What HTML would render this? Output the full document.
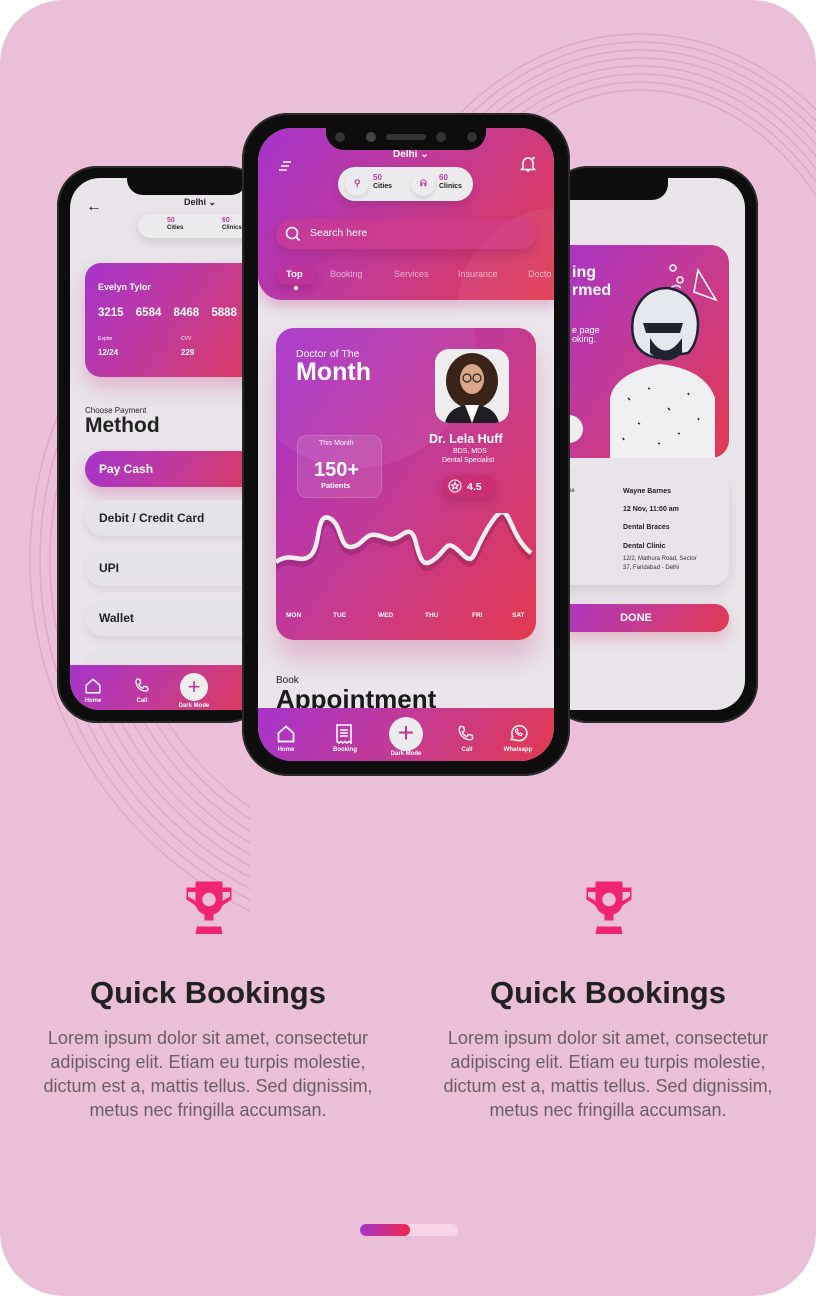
<!DOCTYPE html>
<html><head><meta charset="utf-8">
<style>
*{margin:0;padding:0;box-sizing:border-box}
body{width:816px;height:1296px;background:#fff;font-family:"Liberation Sans",sans-serif;overflow:hidden;position:relative}
.bg{position:absolute;left:0;top:0;width:816px;height:1296px;background:#ebbfd8;border-radius:64px;overflow:hidden}
.abs{position:absolute}
.grad{background:linear-gradient(125deg,#a634cc 0%,#c43a94 50%,#e23a50 100%)}
.phone{position:absolute;background:#0d0d0d;border-radius:40px;box-shadow:0 0 0 2px #2a2a2a inset}
.screen{position:absolute;background:#e9e5ea;overflow:hidden;border-radius:30px}
.notch{position:absolute;background:#0d0d0d;border-radius:0 0 16px 16px}
.w{color:#fff}
.b{font-weight:bold}
.t{position:absolute;white-space:nowrap}
.pill{position:absolute;background:#ecebee;border-radius:20px;box-shadow:0 4px 10px rgba(0,0,0,.12)}
.opt{position:absolute;left:15px;width:200px;height:36px;border-radius:18px;background:#e6e3e8;box-shadow:0 4px 8px rgba(0,0,0,.08);font-weight:bold;font-size:12px;color:#222;padding:11px 14px}
.nav{position:absolute;left:0;right:0;bottom:0}
.nl{position:absolute;font-size:6px;color:#fff;font-weight:bold;transform:translateX(-50%)}
</style></head><body>
<div class="bg">
<svg class="abs" style="left:0;top:0" width="816" height="1296">
<defs>
<clipPath id="c1"><rect x="360" y="30" width="456" height="240"/></clipPath>
<clipPath id="c2"><rect x="0" y="340" width="250" height="590"/></clipPath>
</defs>
<g fill="none" stroke="#dfa9c8" stroke-width="1.5" clip-path="url(#c1)">
<ellipse cx="640" cy="420" rx="240" ry="330"/>
<ellipse cx="640" cy="420" rx="248" ry="338"/>
<ellipse cx="640" cy="420" rx="256" ry="346"/>
<ellipse cx="640" cy="420" rx="264" ry="354"/>
<ellipse cx="640" cy="420" rx="272" ry="362"/>
<ellipse cx="640" cy="420" rx="280" ry="370"/>
<ellipse cx="640" cy="420" rx="288" ry="378"/>
<ellipse cx="640" cy="420" rx="296" ry="386"/>
</g>
<g fill="none" stroke="#dfa9c8" stroke-width="1.5" clip-path="url(#c2)">
<ellipse cx="420" cy="560" rx="300" ry="300"/>
<ellipse cx="420" cy="560" rx="310" ry="310"/>
<ellipse cx="420" cy="560" rx="320" ry="320"/>
<ellipse cx="420" cy="560" rx="330" ry="330"/>
<ellipse cx="420" cy="560" rx="340" ry="340"/>
<ellipse cx="420" cy="560" rx="350" ry="350"/>
<ellipse cx="420" cy="560" rx="360" ry="360"/>
<ellipse cx="420" cy="560" rx="370" ry="370"/>
<ellipse cx="420" cy="560" rx="380" ry="380"/>
<ellipse cx="420" cy="560" rx="390" ry="390"/>
</g>
</svg>

<!-- LEFT PHONE -->
<div class="phone" style="left:57px;top:166px;width:210px;height:557px;z-index:1">
<div class="screen" style="left:13px;top:12px;width:200px;height:532px">
 <div class="t" style="left:16px;top:20px;font-size:16px;color:#222">←</div>
 <div class="t b" style="left:114px;top:19px;font-size:9px;color:#222">Delhi ⌄</div>
 <div class="pill" style="left:68px;top:36px;width:130px;height:24px"></div>
 <div class="t b" style="left:97px;top:39px;font-size:7px;color:#c23aa0;line-height:7px">50<br><span style="color:#222;font-size:6px">Cities</span></div>
 <div class="t b" style="left:152px;top:39px;font-size:7px;color:#c23aa0;line-height:7px">60<br><span style="color:#222;font-size:6px">Clinics</span></div>
 <div class="abs grad" style="left:15px;top:85px;width:200px;height:114px;border-radius:16px;box-shadow:0 10px 20px rgba(200,60,130,.3)"></div>
 <div class="t b w" style="left:28px;top:104px;font-size:9px">Evelyn Tylor</div>
 <div class="t b w" style="left:28px;top:129px;font-size:11.5px;word-spacing:9px">3215 6584 8468 5888</div>
 <div class="t w" style="left:28px;top:158px;font-size:5px">Expire</div>
 <div class="t b w" style="left:28px;top:170px;font-size:8px">12/24</div>
 <div class="t w" style="left:111px;top:158px;font-size:5px">CVV</div>
 <div class="t b w" style="left:111px;top:170px;font-size:8px">229</div>
 <div class="t" style="left:15px;top:228px;font-size:8px;color:#222">Choose Payment</div>
 <div class="t b" style="left:15px;top:236px;font-size:21px;color:#222">Method</div>
 <div class="opt" style="top:273px;color:#fff;background:linear-gradient(110deg,#a634cc,#c43a94 50%,#e23a50);box-shadow:0 8px 14px rgba(200,60,130,.3)">Pay Cash</div>
 <div class="opt" style="top:322px">Debit / Credit Card</div>
 <div class="opt" style="top:372px">UPI</div>
 <div class="opt" style="top:422px">Wallet</div>
 <div class="opt" style="top:472px"></div>
 <div class="nav grad" style="height:45px">
  <svg class="abs" style="left:14px;top:12px" width="18" height="18" viewBox="0 0 24 24" fill="none" stroke="#fff" stroke-width="2"><path d="M3 11L12 3l9 8v10H3z"/></svg>
  <div class="nl" style="left:23px;top:33px">Home</div>
  <svg class="abs" style="left:64px;top:12px" width="16" height="16" viewBox="0 0 24 24" fill="none" stroke="#fff" stroke-width="2"><path d="M5 3l4 1 1 5-3 2a12 12 0 006 6l2-3 5 1 1 4c-1 2-3 2-5 2C9 20 4 15 3 8c0-2 0-4 2-5z"/></svg>
  <div class="nl" style="left:72px;top:33px">Call</div>
  <div class="abs" style="left:110px;top:8px;width:28px;height:28px;border-radius:50%;background:#eee;color:#c2338f;font-size:22px;text-align:center;line-height:27px">+</div>
  <div class="nl" style="left:124px;top:38px">Dark Mode</div>
 </div>
</div>
<div class="notch" style="left:70px;top:12px;width:120px;height:17px"></div>
</div>

<!-- RIGHT PHONE -->
<div class="phone" style="left:548px;top:166px;width:210px;height:557px;z-index:1">
<div class="screen" style="left:-5px;top:12px;width:202px;height:532px">
 <div class="abs grad" style="left:0;top:67px;width:186px;height:213px;border-radius:0 18px 18px 0"></div>
 <div class="t b w" style="left:29px;top:86px;font-size:16px;line-height:18px">ing<br>rmed</div>
 <div class="t w" style="left:29px;top:148px;font-size:9px;line-height:9px">e page<br>oking.</div>
 <div class="abs" style="left:0;top:237px;width:40px;height:28px;border-radius:0 14px 14px 0;background:#eee"></div>
 <svg class="abs" style="left:55px;top:80px" width="130" height="200" viewBox="0 0 130 200">
  <g fill="none" stroke="#fff" stroke-width="1.5"><circle cx="75" cy="10" r="3"/><circle cx="82" cy="22" r="3"/><path d="M100 12l18 30-22-8z"/><path d="M73 30q5-5 10 0"/></g>
  <path d="M12 200V140q5-25 50-34 45 5 55 34v60z" fill="#f0f0f2"/>
  <g stroke="#1f2433" stroke-width="1.5"><path d="M30 140l2 2M50 130l2 1M70 150l2 2M90 135l1 2M40 165l2 1M80 175l2 1M100 160l1 2M25 180l1 2M60 185l2 1"/></g>
  <path d="M60 100q-30-5-25-40q8-30 35-30q28 5 30 35q0 20-10 30z" fill="#e6e8ef" stroke="#1f2433" stroke-width="2.5"/>
  <path d="M45 65h40l-3 10h-34z" fill="#1f2433"/>
  <path d="M52 80q15 25 32 0v15q-15 15-32 0z" fill="#1f2433"/>
 </svg>
 <div class="abs" style="left:0;top:295px;width:186px;height:112px;border-radius:0 16px 16px 0;background:#e8e4ea;box-shadow:0 6px 14px rgba(0,0,0,.1)"></div>
 <div class="t" style="left:25px;top:310px;font-size:6px;color:#333">ne</div>
 <div class="t b" style="left:80px;top:310px;font-size:7px;color:#222">Wayne Barnes</div>
 <div class="t b" style="left:80px;top:328px;font-size:7px;color:#222">12 Nov, 11:00 am</div>
 <div class="t b" style="left:80px;top:346px;font-size:7px;color:#222">Dental Braces</div>
 <div class="t b" style="left:80px;top:365px;font-size:7px;color:#222">Dental Clinic</div>
 <div class="t" style="left:80px;top:377px;font-size:6px;color:#333;line-height:9px">12/2, Mathura Road, Sector<br>37, Faridabad - Delhi</div>
 <div class="abs grad" style="left:0;top:426px;width:186px;height:28px;border-radius:0 14px 14px 0;color:#fff;font-weight:bold;font-size:11px;text-align:center;line-height:28px;box-shadow:0 8px 14px rgba(220,60,100,.25)">DONE</div>
</div>
<div class="notch" style="left:-10px;top:12px;width:130px;height:22px"></div>
</div>

<!-- CENTER PHONE -->
<div class="phone" style="left:242px;top:113px;width:328px;height:663px;z-index:3;border-radius:46px">
<div class="screen" style="left:16px;top:15px;width:296px;height:633px;border-radius:34px">
 <div class="abs grad" style="left:0;top:0;width:296px;height:172px;border-radius:0 0 0 24px;box-shadow:0 8px 10px rgba(190,60,140,.25)"></div>
 <div class="abs" style="left:200px;top:80px;width:200px;height:200px;border-radius:50%;background:rgba(255,255,255,.06)"></div>
 <div class="t b w" style="left:135px;top:21px;font-size:10px">Delhi ⌄</div>
 <svg class="abs" style="left:20px;top:32px" width="14" height="12"><path d="M5 2h8M3 6h8M1 10h8" stroke="#fff" stroke-width="1.6"/></svg>
 <svg class="abs" style="left:262px;top:27px" width="16" height="18" viewBox="0 0 16 18" fill="none" stroke="#fff" stroke-width="1.5"><path d="M3 13V8a5 5 0 0110 0v5l1.5 1.5h-13z"/><path d="M6.5 16h3"/><circle cx="13.5" cy="3" r="1.3" fill="#fff" stroke="none"/></svg>
 <div class="pill" style="left:80px;top:39px;width:135px;height:34px;border-radius:17px"></div>
 <div class="abs" style="left:87px;top:44px;width:24px;height:24px;border-radius:50%;background:#ecebee;box-shadow:0 2px 4px rgba(0,0,0,.12)"></div>
 <div class="abs" style="left:153px;top:44px;width:24px;height:24px;border-radius:50%;background:#ecebee;box-shadow:0 2px 4px rgba(0,0,0,.12)"></div>
 <div class="t b" style="left:96px;top:50px;font-size:9px;color:#c23aa0">⚲</div>
 <div class="t b" style="left:162px;top:50px;font-size:9px;color:#c23aa0">ᕱ</div>
 <div class="t b" style="left:115px;top:46px;font-size:8px;color:#b838b8;line-height:8px">50<br><span style="color:#222;font-size:7px">Cities</span></div>
 <div class="t b" style="left:181px;top:46px;font-size:8px;color:#b838b8;line-height:8px">60<br><span style="color:#222;font-size:7px">Clinics</span></div>
 <div class="abs" style="left:18px;top:91px;width:260px;height:30px;border-radius:15px;background:rgba(210,60,140,.55);box-shadow:0 6px 12px rgba(120,20,80,.25)"></div>
 <svg class="abs" style="left:27px;top:98px" width="16" height="16" fill="none" stroke="#fff" stroke-width="1.6"><circle cx="7" cy="7" r="5.5"/><path d="M11 11l3.5 3.5"/></svg>
 <div class="t w" style="left:52px;top:99px;font-size:10.5px">Search here</div>
 <div class="abs" style="left:18px;top:137px;width:40px;height:20px;border-radius:10px;background:rgba(190,50,150,.7);box-shadow:0 4px 8px rgba(100,20,80,.3)"></div>
 <div class="t b w" style="left:28px;top:141px;font-size:9.5px">Top</div>
 <div class="abs" style="left:36px;top:158px;width:4px;height:4px;border-radius:50%;background:#fff"></div>
 <div class="t" style="left:72px;top:141px;font-size:9px;color:rgba(255,255,255,.6)">Booking</div>
 <div class="t" style="left:136px;top:141px;font-size:9px;color:rgba(255,255,255,.6)">Services</div>
 <div class="t" style="left:200px;top:141px;font-size:9px;color:rgba(255,255,255,.6)">Insurance</div>
 <div class="t" style="left:270px;top:141px;font-size:9px;color:rgba(255,255,255,.6)">Docto</div>

 <div class="abs grad" style="left:18px;top:200px;width:260px;height:312px;border-radius:18px;overflow:hidden;box-shadow:0 18px 24px rgba(200,60,130,.28)">
  <div class="abs" style="left:-40px;top:-100px;width:240px;height:240px;border-radius:50%;background:rgba(255,255,255,.06)"></div>
  <div class="t w" style="left:20px;top:20px;font-size:10.5px">Doctor of The</div>
  <div class="t b w" style="left:20px;top:30px;font-size:25px">Month</div>
  <div class="abs" style="left:159px;top:21px;width:74px;height:74px;border-radius:14px;background:#eeeeef;overflow:hidden">
   <svg width="74" height="74" viewBox="0 0 74 74"><ellipse cx="37" cy="32" rx="26" ry="28" fill="#3a2419"/><ellipse cx="37" cy="30" rx="12" ry="15" fill="#d9a68a"/><path d="M10 74q4-18 27-18 23 0 27 18z" fill="#1e1e22"/><path d="M30 56l7 18 7-18z" fill="#fff"/><g fill="none" stroke="#222" stroke-width="1.2"><circle cx="32" cy="29" r="4"/><circle cx="42" cy="29" r="4"/></g></svg>
  </div>
  <div class="t b w" style="left:153px;top:104px;font-size:12.5px">Dr. Lela Huff</div>
  <div class="t w" style="left:177px;top:120px;font-size:7px">BDS, MDS</div>
  <div class="t w" style="left:166px;top:129px;font-size:7px">Dental Specialist</div>
  <div class="abs" style="left:166px;top:147px;width:54px;height:22px;border-radius:11px;background:rgba(200,40,110,.6);box-shadow:0 4px 8px rgba(110,20,60,.3)"></div>
  <svg class="abs" style="left:172px;top:151px" width="14" height="14" fill="none" stroke="#fff" stroke-width="1.1"><circle cx="7" cy="7" r="6"/><path d="M7 3.5l1 2.3 2.4.2-1.8 1.6.6 2.4L7 8.7 4.8 10l.6-2.4L3.6 6l2.4-.2z"/></svg>
  <div class="t b w" style="left:191px;top:153px;font-size:10.5px">4.5</div>
  <div class="abs" style="left:21px;top:107px;width:85px;height:63px;border-radius:10px;background:rgba(255,255,255,.1);border:1px solid rgba(255,255,255,.15)"></div>
  <div class="t w" style="left:43px;top:112px;font-size:7px">This Month</div>
  <div class="t b w" style="left:38px;top:131px;font-size:20px">150+</div>
  <div class="t b w" style="left:45px;top:153px;font-size:7.5px">Patients</div>
  <svg class="abs" style="left:0;top:185px" width="260" height="70" viewBox="0 0 260 70">
   <path d="M0 49C15 38 25 52 35 42S40 0 53 5 63 35 75 34 88 20 100 22 112 28 120 25 135 10 140 30 148 55 160 45 170 25 185 40 195 40 215 10 230 20 255 40 260 45" fill="none" stroke="rgba(90,10,60,.25)" stroke-width="6" transform="translate(0,5)"/>
   <path d="M0 49C15 38 25 52 35 42S40 0 53 5 63 35 75 34 88 20 100 22 112 28 120 25 135 10 140 30 148 55 160 45 170 25 185 40 195 40 215 10 230 20 255 40 260 45" fill="none" stroke="#f2eef2" stroke-width="4.5"/>
  </svg>
  <div class="t b w" style="left:10px;top:284px;font-size:6.5px">MON</div>
  <div class="t b w" style="left:57px;top:284px;font-size:6.5px">TUE</div>
  <div class="t b w" style="left:102px;top:284px;font-size:6.5px">WED</div>
  <div class="t b w" style="left:149px;top:284px;font-size:6.5px">THU</div>
  <div class="t b w" style="left:196px;top:284px;font-size:6.5px">FRI</div>
  <div class="t b w" style="left:236px;top:284px;font-size:6.5px">SAT</div>
 </div>
 <div class="t" style="left:18px;top:547px;font-size:10px;color:#222">Book</div>
 <div class="t b" style="left:18px;top:556px;font-size:26px;color:#1a1a1a">Appointment</div>
 <div class="nav grad" style="height:53px">
  <svg class="abs" style="left:18px;top:16px" width="20" height="20" viewBox="0 0 24 24" fill="none" stroke="#fff" stroke-width="2"><path d="M3 11L12 3l9 8v10H3z"/></svg>
  <div class="nl" style="left:28px;top:39px">Home</div>
  <svg class="abs" style="left:77px;top:16px" width="18" height="20" viewBox="0 0 18 20" fill="none" stroke="#fff" stroke-width="1.6"><path d="M2 1h14v18l-2-1.5-2 1.5-2-1.5-2 1.5-2-1.5-2 1.5-2-1.5z"/><path d="M5 6h8M5 9h8M5 12h8"/></svg>
  <div class="nl" style="left:87px;top:39px">Booking</div>
  <div class="abs" style="left:131px;top:9px;width:34px;height:34px;border-radius:50%;background:#ecebee;color:#c2338f;font-size:28px;text-align:center;line-height:32px">+</div>
  <div class="nl" style="left:148px;top:43px">Dark Mode</div>
  <svg class="abs" style="left:199px;top:16px" width="18" height="18" viewBox="0 0 24 24" fill="none" stroke="#fff" stroke-width="1.8"><path d="M5 3l4 1 1 5-3 2a12 12 0 006 6l2-3 5 1 1 4c-1 2-3 2-5 2C9 20 4 15 3 8c0-2 0-4 2-5z"/></svg>
  <div class="nl" style="left:209px;top:39px">Call</div>
  <svg class="abs" style="left:250px;top:15px" width="20" height="20" viewBox="0 0 24 24" fill="none" stroke="#fff" stroke-width="1.8"><path d="M4 20l1.5-4A9 9 0 1112 21a9 9 0 01-4-1z"/><path d="M9 8c0 4 3 7 7 7l1-2-2-1-1 1c-1-.5-2.5-2-3-3l1-1-1-2z" stroke-width="1.2"/></svg>
  <div class="nl" style="left:260px;top:39px">Whatsapp</div>
 </div>
</div>
<div class="notch" style="left:84px;top:15px;width:160px;height:22px;border-radius:0 0 18px 18px"></div>
<div class="abs" style="left:93px;top:19px;width:10px;height:10px;border-radius:50%;background:#333"></div>
<div class="abs" style="left:124px;top:19px;width:10px;height:10px;border-radius:50%;background:#444"></div>
<div class="abs" style="left:144px;top:21px;width:40px;height:6px;border-radius:3px;background:#333"></div>
<div class="abs" style="left:194px;top:19px;width:10px;height:10px;border-radius:50%;background:#333"></div>
<div class="abs" style="left:225px;top:19px;width:10px;height:10px;border-radius:50%;background:#333"></div>
</div>

<!-- FEATURES -->
<svg class="abs" style="left:179px;top:880px" width="60" height="60" viewBox="0 0 40 40"><path d="M11 1h18v4h6v8l-6 4v0q-2 5-6 6v4h-6v-4q-4-1-6-6l-6-4V5h6zM6 8v3l5 3V8zM34 8v3l-5 3V8z" fill="#f0246f" fill-rule="evenodd"/><circle cx="20" cy="13" r="4.5" fill="#ebbfd8"/><path d="M12 31h16l1 5H11z" fill="#f0246f"/></svg>
<svg class="abs" style="left:579px;top:880px" width="60" height="60" viewBox="0 0 40 40"><path d="M11 1h18v4h6v8l-6 4v0q-2 5-6 6v4h-6v-4q-4-1-6-6l-6-4V5h6zM6 8v3l5 3V8zM34 8v3l-5 3V8z" fill="#f0246f" fill-rule="evenodd"/><circle cx="20" cy="13" r="4.5" fill="#ebbfd8"/><path d="M12 31h16l1 5H11z" fill="#f0246f"/></svg>
<div class="t b" style="left:8px;width:400px;text-align:center;top:975px;font-size:31px;color:#222">Quick Bookings</div>
<div class="t b" style="left:408px;width:400px;text-align:center;top:975px;font-size:31px;color:#222">Quick Bookings</div>
<div class="t" style="left:8px;width:400px;text-align:center;top:1026px;font-size:18px;line-height:24px;color:#6b5f66;white-space:normal">Lorem ipsum dolor sit amet, consectetur<br>adipiscing elit. Etiam eu turpis molestie,<br>dictum est a, mattis tellus. Sed dignissim,<br>metus nec fringilla accumsan.</div>
<div class="t" style="left:408px;width:400px;text-align:center;top:1026px;font-size:18px;line-height:24px;color:#6b5f66;white-space:normal">Lorem ipsum dolor sit amet, consectetur<br>adipiscing elit. Etiam eu turpis molestie,<br>dictum est a, mattis tellus. Sed dignissim,<br>metus nec fringilla accumsan.</div>

<div class="abs" style="left:360px;top:1224px;width:98px;height:12px;border-radius:6px;background:#f9d3e8"></div>
<div class="abs" style="left:360px;top:1224px;width:50px;height:12px;border-radius:6px;background:linear-gradient(90deg,#a634cc,#f0284a)"></div>
</div>
</body></html>
